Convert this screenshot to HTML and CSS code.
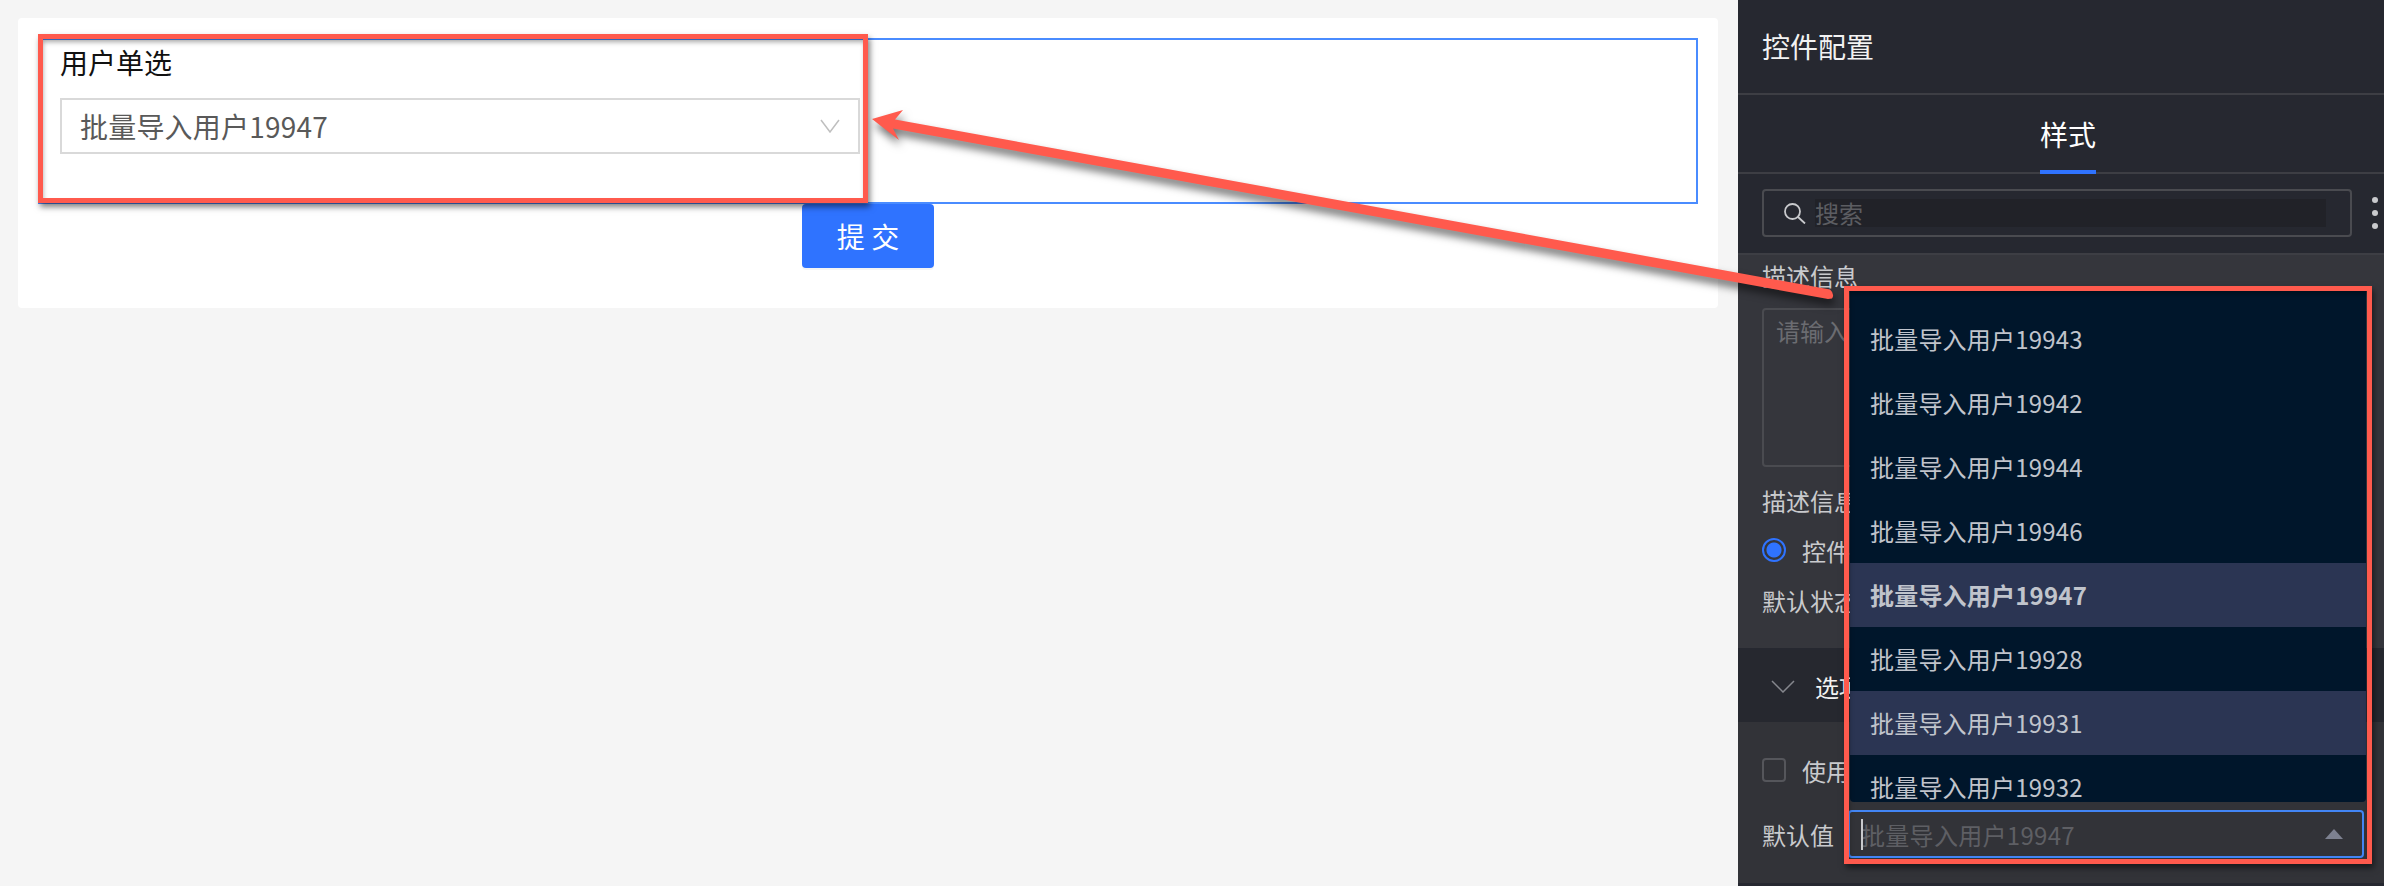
FILE: index.html
```html
<!DOCTYPE html>
<html lang="zh-CN">

<head>
  <meta charset="UTF-8" />
  <title>控件配置</title>
  <link rel="stylesheet" href="styles.css">
</head>

<body>
  <main class="canvas">
    <div class="card">
      <div class="widget-box">
        <div class="widget-label">用户单选</div>
        <div class="widget-select">
          <span>批量导入用户19947</span>
          <svg class="widget-chevron" width="20" height="14" viewBox="0 0 20 14" fill="none">
            <path d="M1 1l9 12 9-12" stroke="#bfbfbf" stroke-width="1.5" />
          </svg>
        </div>
      </div>
      <button class="submit">提 交</button>
    </div>
  </main>

  <aside class="panel">
    <div class="panel-head">控件配置</div>
    <div class="tabs"><span class="tab">样式</span></div>

    <div class="search-row">
      <div class="search">
        <svg width="23" height="22" viewBox="0 0 23 22" fill="none" stroke="#c9cacd" stroke-width="1.8">
          <circle cx="9.5" cy="9.5" r="7.5" />
          <path d="M15 15l7 6.5" />
        </svg>
        <span class="search-text">搜索</span>
      </div>
      <div class="dots"><i></i><i></i><i></i></div>
    </div>

    <section class="group">
      <div class="group-label">描述信息</div>
      <div class="textarea">请输入</div>
      <div class="group-label">描述信息</div>
      <div class="check-row"><span class="radio"></span>控件</div>
      <div class="group-label">默认状态</div>
    </section>

    <div class="band">
      <svg width="24" height="13" viewBox="0 0 24 13" fill="none">
        <path d="M1 1l11 11 11-11" stroke="#85878d" stroke-width="1.5" />
      </svg>
      <span>选项</span>
    </div>

    <section class="group group-options">
      <div class="check-row"><span class="checkbox"></span>使用</div>
      <div class="default-row">
        <span class="default-label">默认值</span>
        <div class="default-input">
          <span class="caret"></span>
          <span class="default-text">批量导入用户19947</span>
          <svg width="18" height="10" viewBox="0 0 18 10">
            <path d="M9 0l9 10H0z" fill="#7d8190" />
          </svg>
        </div>
      </div>
    </section>

    <div class="dropdown">
      <div class="option">批量导入用户19943</div>
      <div class="option">批量导入用户19942</div>
      <div class="option">批量导入用户19944</div>
      <div class="option">批量导入用户19946</div>
      <div class="option selected">批量导入用户19947</div>
      <div class="option">批量导入用户19928</div>
      <div class="option hover">批量导入用户19931</div>
      <div class="option">批量导入用户19932</div>
    </div>
  </aside>

  <!-- annotations drawn on top of the screenshot -->
  <div class="mark mark-left"></div>
  <div class="mark mark-right"></div>
  <svg class="arrow" width="2384" height="886" viewBox="0 0 2384 886">
    <path d="M872 119L903 110L895 119.5L1830 289.5Q1835 294 1832 298.5L1828 299L893 128.5L899 140Z" fill="#ff5a4d" />
  </svg>
</body>

</html>
```

FILE: styles.css
```css
* {
  box-sizing: border-box;
}

html,
body {
  height: 886px;
  overflow: hidden;
}

body {
  margin: 0;
  display: flex;
  position: relative;
  background: #f5f5f5;
  font-family: "Noto Sans CJK SC", "Noto Sans", sans-serif;
  font-size: 24px;
}

.canvas {
  width: 1738px;
  padding: 18px 20px 0 18px;
}

.card {
  background: #fff;
  border-radius: 4px;
  padding: 20px 20px 40px;
  display: flex;
  flex-direction: column;
  align-items: center;
}

.widget-box {
  width: 100%;
  height: 166px;
  border: 2px solid #4a8cff;
  padding: 2px 20px;
}

.widget-label {
  font-size: 28px;
  line-height: 40px;
  color: #111;
}

.widget-select {
  width: 800px;
  height: 56px;
  margin-top: 16px;
  border: 2px solid #d9d9d9;
  padding: 0 18px;
  display: flex;
  align-items: center;
  justify-content: space-between;
  font-size: 28px;
  letter-spacing: 0.2px;
  color: #595959;
}

.submit {
  width: 132px;
  height: 64px;
  border: 0;
  border-radius: 4px;
  background: #2f73ff;
  color: #fff;
  font-family: inherit;
  font-size: 28px;
  box-shadow: 0 2px 0 rgba(0, 0, 0, 0.04);
}

.panel {
  position: relative;
  width: 646px;
  height: 886px;
  background: #262830;
  color: #c9cacd;
  display: flex;
  flex-direction: column;
}

.panel-head {
  height: 95px;
  padding: 0 24px;
  border-bottom: 2px solid #3d3e44;
  font-size: 28px;
  line-height: 92px;
  color: #f2f2f2;
}

.tabs {
  height: 79px;
  padding-left: 14px;
  border-bottom: 2px solid #3d3e44;
  display: flex;
  justify-content: center;
}

.tab {
  height: 79px;
  border-bottom: 4px solid #2f73ff;
  font-size: 28px;
  line-height: 79px;
  color: #fff;
}

.search-row {
  height: 81px;
  padding: 15px 6px 0 24px;
  border-bottom: 2px solid #3d3e44;
  display: flex;
  justify-content: space-between;
}

.search {
  width: 590px;
  height: 48px;
  border: 2px solid #4a4b50;
  border-radius: 4px;
  padding: 0 0 0 19px;
  display: flex;
  align-items: center;
  gap: 9px;
}

.search-text {
  width: 511px;
  height: 28px;
  line-height: 28px;
  background: #212228;
  color: #5c5d62;
}

.dots {
  padding-top: 8px;
  display: flex;
  flex-direction: column;
  gap: 7px;
}

.dots i {
  width: 6px;
  height: 6px;
  border-radius: 50%;
  background: #c9cacd;
}

.group {
  height: 393px;
  padding: 3px 24px 0;
  background: #35363c;
}

.group-label {
  line-height: 36px;
  color: #c9cacd;
}

.textarea {
  width: 300px;
  height: 159px;
  margin: 14px 0 16px;
  padding: 3px 12px;
  border: 2px solid #4a4b50;
  border-radius: 4px;
  color: #6b6c71;
}

.check-row {
  display: flex;
  align-items: center;
  gap: 16px;
  height: 36px;
  margin: 13px 0 15px;
}

.radio {
  width: 24px;
  height: 24px;
  border-radius: 50%;
  border: 2px solid #2f73ff;
  background: radial-gradient(circle, #2f73ff 0 7px, transparent 8px);
}

.band {
  height: 72px;
  margin-top: 2px;
  padding: 0 33px;
  background: #26282f;
  display: flex;
  align-items: center;
  gap: 20px;
  color: #f2f2f2;
}

.group-options {
  height: 161px;
  margin-bottom: 2px;
  padding-top: 1px;
  background: #323338;
}

.group-options .check-row {
  margin: 29px 0 0;
}

.checkbox {
  width: 24px;
  height: 24px;
  border: 2px solid #55565b;
  border-radius: 4px;
}

.default-row {
  display: flex;
  align-items: center;
  justify-content: space-between;
  margin: 22px -4px 0 0;
}

.default-input {
  position: relative;
  width: 516px;
  height: 48px;
  border: 2px solid #4285f4;
  border-radius: 4px;
  padding: 0 19px 0 11px;
  display: flex;
  align-items: center;
  justify-content: space-between;
  letter-spacing: 0.3px;
  color: #5e5f64;
}

.caret {
  position: absolute;
  left: 11px;
  top: 7px;
  width: 2px;
  height: 31px;
  background: #c9cacd;
}

.dropdown {
  position: absolute;
  left: 112px;
  top: 290px;
  width: 516px;
  height: 512px;
  padding-top: 17px;
  overflow: hidden;
  background: #00162b;
  border-radius: 0 0 4px 4px;
  color: #c0c4cc;
}

.option {
  height: 64px;
  padding: 0 20px;
  line-height: 64px;
  letter-spacing: 0.2px;
}

.option.selected {
  background: #2b3553;
  font-weight: 700;
}

.option.hover {
  background: #2b3553;
}

.mark {
  position: absolute;
  border: 5px solid #ff5a4d;
  box-shadow: 2px 4px 6px rgba(0, 0, 0, 0.5), inset 1px 4px 5px -1px rgba(0, 0, 0, 0.35);
}

.mark-left {
  left: 38px;
  top: 34px;
  width: 830px;
  height: 169px;
}

.mark-right {
  left: 1844px;
  top: 286px;
  width: 528px;
  height: 578px;
}

.arrow {
  position: absolute;
  left: 0;
  top: 0;
  filter: drop-shadow(2px 6px 4px rgba(0, 0, 0, 0.55));
}
```
